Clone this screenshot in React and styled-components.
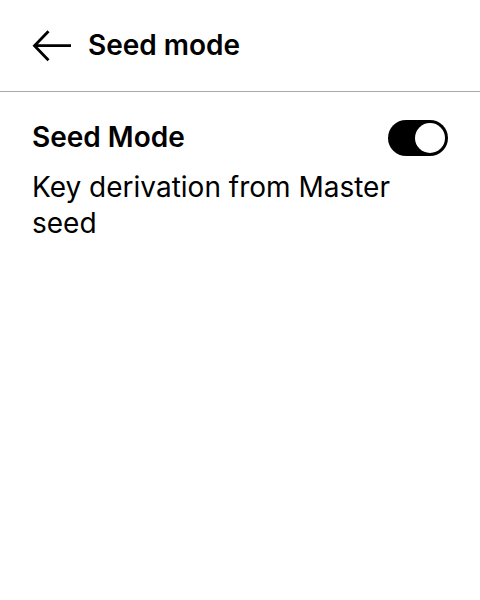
import React, { useState } from "react";
import styled, { createGlobalStyle } from "styled-components";

const GlobalStyle = createGlobalStyle`
  *, *::before, *::after { box-sizing: border-box; }
  body {
    margin: 0;
    background: #fff;
    color: #000;
    font-family: Inter, sans-serif;
  }
`;

const Header = styled.header`
  display: flex;
  align-items: flex-start;
  gap: 16px;
  padding: 28px 32px 29px;
  border-bottom: 1px solid #aaa;
`;

const BackButton = styled.button`
  display: flex;
  padding: 0;
  border: 0;
  background: none;
  color: inherit;
  cursor: pointer;
`;

const Title = styled.h1`
  margin: 0;
  font-size: 28px;
  line-height: 34px;
  font-weight: 600;
`;

const Content = styled.main`
  padding: 28px 32px;
`;

const SettingRow = styled.div`
  display: flex;
  align-items: flex-start;
  justify-content: space-between;
  gap: 16px;
`;

const SettingLabel = styled.label`
  font-size: 28px;
  line-height: 34px;
  font-weight: 600;
`;

const Switch = styled.input`
  appearance: none;
  display: flex;
  flex: none;
  align-items: center;
  width: 60px;
  height: 36px;
  margin: 0;
  padding: 0 3px;
  border: 0;
  border-radius: 18px;
  background: #000;
  cursor: pointer;

  &::before {
    content: "";
    width: 30px;
    height: 30px;
    border-radius: 50%;
    background: #fff;
  }

  &:checked {
    justify-content: flex-end;
  }
`;

const Description = styled.p`
  margin: 13px 0 0;
  font-size: 28px;
  line-height: 36px;
  font-weight: 400;
`;

function ArrowLeft() {
  return (
    <svg width="40" height="34" viewBox="0 0 40 34" fill="none" stroke="currentColor" strokeWidth="2.8" aria-hidden="true">
      <path d="M39 17.7H2.5M16.5 3.2L2.5 17.7L16.5 32.2" />
    </svg>
  );
}

export default function App() {
  const [enabled, setEnabled] = useState(true);
  return (
    <>
      <GlobalStyle />
      <Header>
        <BackButton type="button" aria-label="Back">
          <ArrowLeft />
        </BackButton>
        <Title>Seed mode</Title>
      </Header>
      <Content>
        <SettingRow>
          <SettingLabel htmlFor="seed-mode">Seed Mode</SettingLabel>
          <Switch
            id="seed-mode"
            type="checkbox"
            role="switch"
            aria-describedby="seed-mode-description"
            checked={enabled}
            onChange={(event) => setEnabled(event.target.checked)}
          />
        </SettingRow>
        <Description id="seed-mode-description">Key derivation from Master seed</Description>
      </Content>
    </>
  );
}
